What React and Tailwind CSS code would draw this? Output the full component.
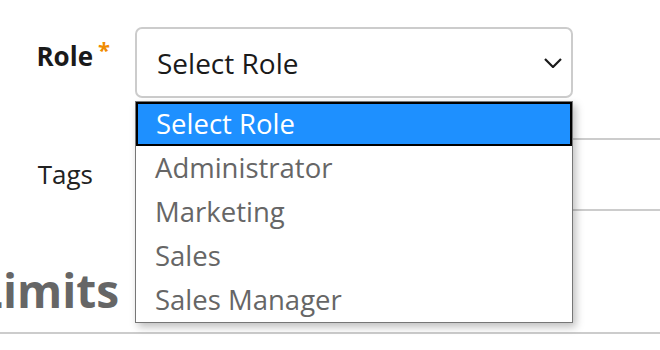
export default function App() {
  const roles = ['Select Role', 'Administrator', 'Marketing', 'Sales', 'Sales Manager'];

  return (
    <div className="relative w-[660px] h-[350px] overflow-hidden bg-white font-['Open_Sans',sans-serif]">
      <div className="flex items-start pt-[27px]">
        <div className="w-[135px] shrink-0 pr-[42px] pt-[11px] text-right">
          <span className="relative text-[26px] font-bold leading-[36px] text-[#1a1a1a]">
            Role
            <span className="absolute -right-[17px] -top-[7px] text-[22px] font-bold text-[#f08c00]">*</span>
          </span>
        </div>
        <div className="flex h-[71px] w-[438px] items-center justify-between rounded-[7px] border-2 border-[#cccccc] pl-[20px] pr-[9px]">
          <span className="text-[28px] text-[#1a1a1a]">Select Role</span>
          <svg width="18" height="10" viewBox="0 0 18 10" fill="none" stroke="#1a1a1a" strokeWidth="2.2">
            <path d="M1 1l8 8 8-8" />
          </svg>
        </div>
      </div>

      <div className="mt-[40px] flex items-center">
        <div className="w-[135px] shrink-0 pr-[42px] text-right text-[26px] text-[#222]">Tags</div>
        <div className="h-[73px] flex-1 border-y-2 border-l-2 border-[#cccccc]" />
      </div>

      <h2 className="ml-[-23px] mt-[52px] text-[46px] font-bold leading-[55px] text-[#666]">Limits</h2>
      <div className="mt-[14px] h-[2px] w-full bg-[#cccccc]" />

      <ul className="absolute left-[135px] top-[101px] w-[438px] border border-[#767676] bg-white shadow-[3px_4px_8px_rgba(0,0,0,0.25)]">
        {roles.map((r, i) => (
          <li
            key={r}
            className={
              i === 0
                ? 'h-[44px] border-2 border-black bg-[#1e90ff] pl-[18px] text-[27.5px] leading-[40px] text-white'
                : 'h-[44px] pl-[19px] text-[27.5px] leading-[44px] text-[#666]'
            }
          >
            {r}
          </li>
        ))}
      </ul>
    </div>
  );
}
